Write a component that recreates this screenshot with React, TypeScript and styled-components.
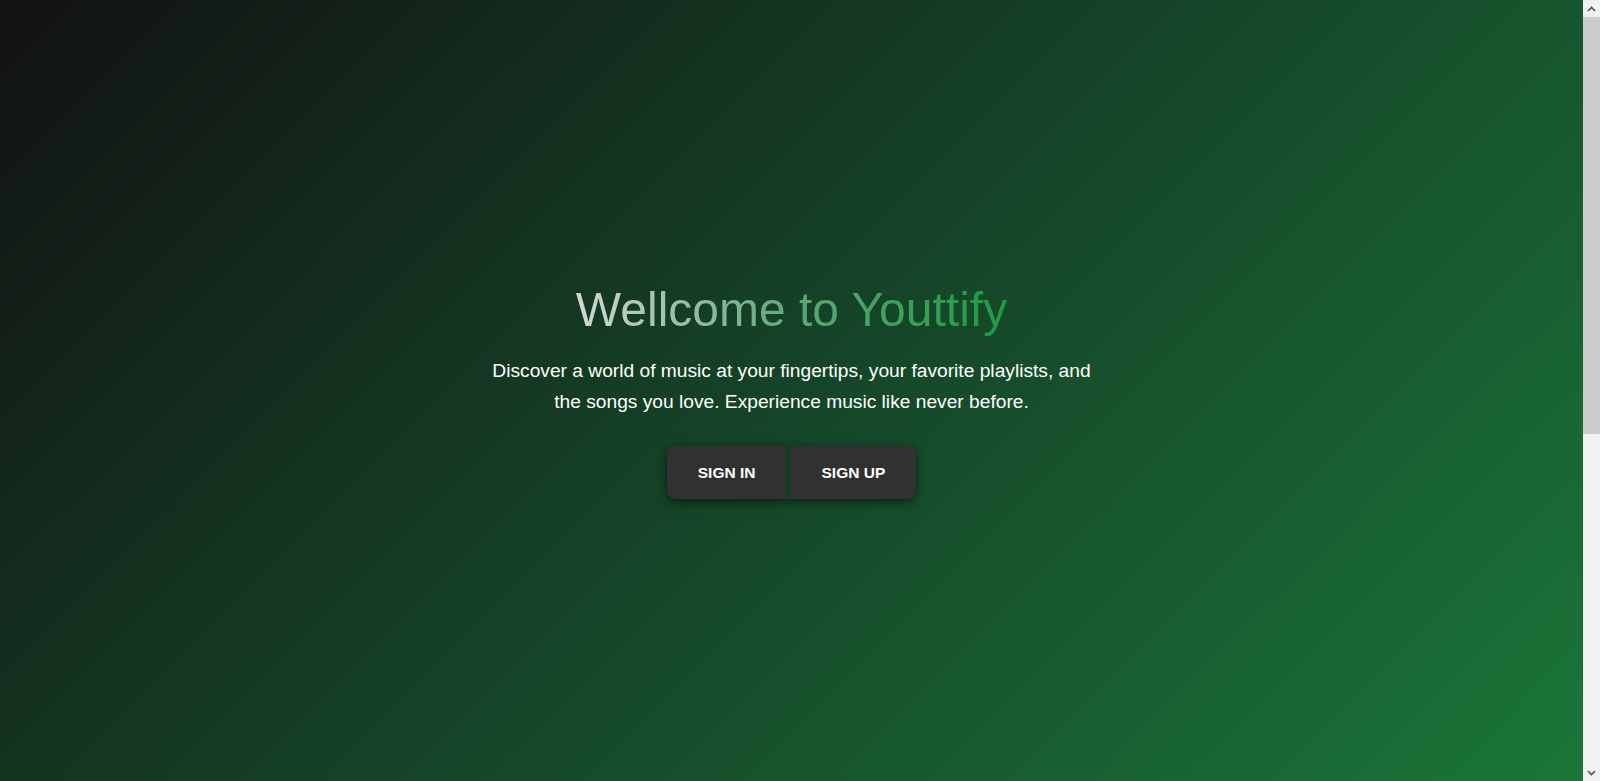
import styled, { createGlobalStyle } from "styled-components";

const GlobalStyle = createGlobalStyle`
  html, body {
    margin: 0;
    padding: 0;
    height: 100%;
    overflow: hidden;
  }

  body {
    font-family: "Liberation Sans", Arial, sans-serif;
    background-color: #121212;
  }

  * {
    box-sizing: border-box;
  }
`;

const Frame = styled.div`
  display: flex;
  height: 100vh;
`;

const Main = styled.main`
  flex: 1;
  min-width: 0;
  overflow-y: auto;
  scrollbar-width: none;

  &::-webkit-scrollbar {
    display: none;
  }
`;

// desktop-style scrollbar rail, as seen in the screenshot
const Rail = styled.div`
  width: 17px;
  flex-shrink: 0;
  display: flex;
  flex-direction: column;
  background-color: #f1f1f1;
`;

const RailArrow = styled.div`
  height: 17px;
  display: flex;
  align-items: center;
  justify-content: center;
  color: #505050;
`;

const RailTrack = styled.div`
  flex: 1;
  display: flex;
  flex-direction: column;
`;

const RailThumb = styled.div`
  height: 417px;
  background-color: #cdcdcd;
`;

const Hero = styled.section`
  min-height: 100vh;
  display: flex;
  align-items: center;
  justify-content: center;
  background: linear-gradient(135deg, #121212 0%, #154428 50%, #1a7639 100%);
`;

const Content = styled.div`
  display: flex;
  flex-direction: column;
  align-items: center;
  text-align: center;
`;

const Title = styled.h1`
  margin: 0 0 18px;
  font-size: 48px;
  font-weight: 400;
  line-height: 55px;
  background: linear-gradient(90deg, #d3d6d3 0%, #5ea878 50%, #1d9a42 100%);
  -webkit-background-clip: text;
  background-clip: text;
  color: transparent;
`;

const Lead = styled.p`
  margin: 0 0 29px;
  max-width: 600px;
  font-size: 19.2px;
  line-height: 31px;
  color: #ffffff;
`;

const ButtonGroup = styled.div`
  display: flex;
  gap: 4px;
  box-shadow: 0 4px 12px rgba(0, 0, 0, 0.35);
  border-radius: 8px;
`;

const Button = styled.button<{ $side: "left" | "right" }>`
  padding: 18px 31px;
  border: none;
  background-color: #313131;
  color: #ffffff;
  font-family: "Liberation Sans", Arial, sans-serif;
  font-size: 15.5px;
  font-weight: 700;
  line-height: 17px;
  text-transform: uppercase;
  cursor: pointer;
  border-radius: ${(p) => (p.$side === "left" ? "8px 0 0 8px" : "0 8px 8px 0")};
  box-shadow: 0 2px 6px rgba(0, 0, 0, 0.25);

  &:hover {
    background-color: #3a3a3a;
  }
`;

const Below = styled.section`
  height: 619px;
  background-color: #121212;
`;

const Chevron = ({ up }: { up?: boolean }) => (
  <svg width="9" height="6" viewBox="0 0 9 6">
    <path
      d={up ? "M1 5 L4.5 1.5 L8 5" : "M1 1 L4.5 4.5 L8 1"}
      fill="none"
      stroke="currentColor"
      strokeWidth="1.6"
    />
  </svg>
);

export default function App() {
  return (
    <>
      <GlobalStyle />
      <Frame>
        <Main>
          <Hero>
            <Content>
              <Title>Wellcome to Youttify</Title>
              <Lead>
                Discover a world of music at your fingertips, your favorite
                playlists, and the songs you love. Experience music like never
                before.
              </Lead>
              <ButtonGroup>
                <Button $side="left">Sign in</Button>
                <Button $side="right">Sign up</Button>
              </ButtonGroup>
            </Content>
          </Hero>
          <Below />
        </Main>
        <Rail>
          <RailArrow>
            <Chevron up />
          </RailArrow>
          <RailTrack>
            <RailThumb />
          </RailTrack>
          <RailArrow>
            <Chevron />
          </RailArrow>
        </Rail>
      </Frame>
    </>
  );
}
